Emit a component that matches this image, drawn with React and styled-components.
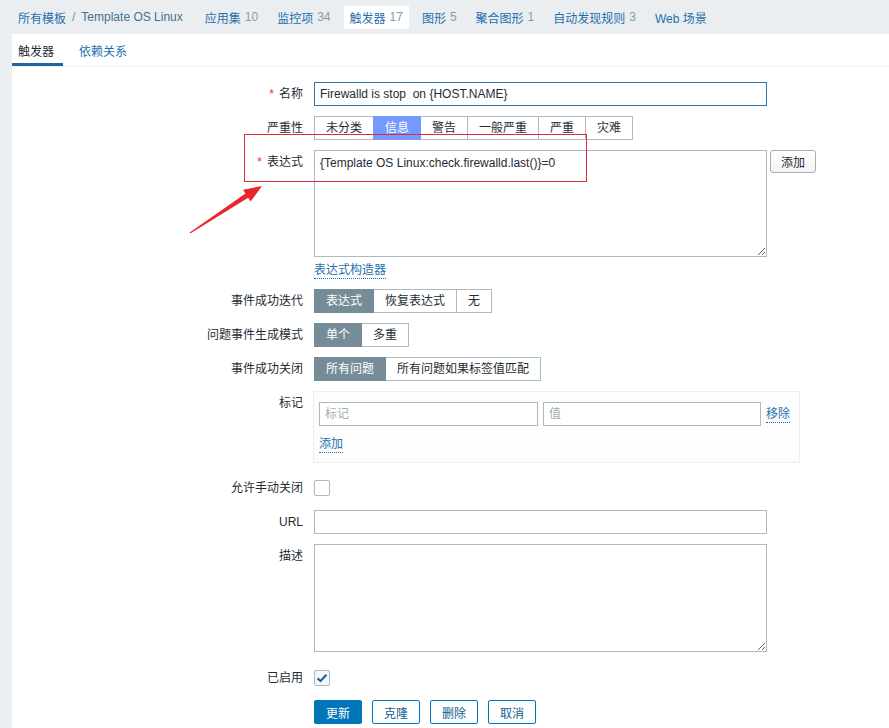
import React from 'react';
import styled, { createGlobalStyle, css } from 'styled-components';

const GlobalStyle = createGlobalStyle`
  html, body {
    margin: 0;
    padding: 0;
    background: #ebeef0;
  }
  body {
    font-family: "Liberation Sans", "Noto Sans CJK SC", sans-serif;
    font-size: 12px;
    color: #1f2c33;
  }
`;

const Page = styled.div`
  position: relative;
  width: 889px;
  height: 728px;
  overflow: hidden;
  background: #ebeef0;
`;

const TopNav = styled.nav`
  display: flex;
  align-items: center;
  height: 34px;
  padding-left: 12px;
  gap: 7px;
`;

const NavItem = styled.a`
  display: inline-flex;
  align-items: center;
  height: 23px;
  padding: 0 6px;
  color: #1f6fae;
  white-space: nowrap;
  ${(p) => p.$active && css`
    background: #ffffff;
  `}
`;

const Crumb = styled.span`
  display: inline-flex;
  align-items: center;
  gap: 6px;
  padding: 0 6px;
  margin-right: 3px;
  color: #1f6fae;
`;

const CrumbSep = styled.span`
  color: #768d99;
`;

const CrumbHost = styled.span`
  color: #46708f;
`;

const Count = styled.span`
  color: #8b9ba4;
  margin-left: 4px;
`;

const Panel = styled.div`
  margin-left: 12px;
  background: #ffffff;
  height: 694px;
`;

const SubTabs = styled.div`
  display: flex;
  height: 32px;
  border-bottom: 1px solid #f0f2f3;
`;

const SubTab = styled.div`
  display: flex;
  align-items: center;
  padding: 0 9px 0 6px;
  margin-right: 10px;
  color: ${(p) => (p.$active ? '#1f2c33' : '#1f6fae')};
  border-bottom: 3px solid ${(p) => (p.$active ? '#1f65a6' : 'transparent')};
  padding-top: 3px;
`;

const Form = styled.div`
  display: grid;
  grid-template-columns: 291px 1fr;
  column-gap: 11px;
  row-gap: 10px;
  padding-top: 15px;
`;

const Label = styled.div`
  text-align: right;
  line-height: 24px;
  white-space: nowrap;
  ${(p) => p.$required && css`
    &::before {
      content: '*';
      color: #e33734;
      margin-right: 5px;
    }
  `}
`;

const Field = styled.div`
  display: flex;
  align-items: flex-start;
  margin-bottom: ${(p) => p.$mb || 0}px;
`;

const Column = styled.div`
  display: flex;
  flex-direction: column;
  align-items: flex-start;
`;

const TextInput = styled.input`
  box-sizing: border-box;
  width: ${(p) => p.$w || 453}px;
  height: 24px;
  padding: 0 5px;
  border: 1px solid ${(p) => (p.$focused ? '#2f79b3' : '#acbbc2')};
  background: #ffffff;
  font: inherit;
  color: #1f2c33;
  outline: none;
  &::placeholder {
    color: #a3adb3;
  }
`;

const TextArea = styled.textarea`
  box-sizing: border-box;
  width: 453px;
  height: ${(p) => p.$h}px;
  padding: 5px;
  border: 1px solid #acbbc2;
  font: inherit;
  line-height: 14px;
  color: #1f2c33;
  resize: vertical;
  outline: none;
`;

const PlainButton = styled.button`
  box-sizing: border-box;
  height: 23px;
  margin-left: 3px;
  padding: 0 10px;
  border: 1px solid #adadad;
  border-radius: 3px;
  background: linear-gradient(#ffffff, #f3f3f3);
  font: inherit;
  color: #1f2c33;
`;

const ToggleGroup = styled.div`
  display: flex;
`;

const Toggle = styled.div`
  box-sizing: border-box;
  height: 24px;
  line-height: 22px;
  padding: 0 11px;
  border: 1px solid #acbbc2;
  margin-left: -1px;
  &:first-child {
    margin-left: 0;
  }
  background: ${(p) => p.$bg || '#ffffff'};
  color: ${(p) => (p.$bg ? '#ffffff' : '#1f2c33')};
  ${(p) => p.$bg && css`
    border-color: ${p.$bg};
    position: relative;
  `}
`;

const DottedLink = styled.a`
  color: #1f6fae;
  line-height: 16px;
  border-bottom: 1px dotted #1f6fae;
  cursor: pointer;
  margin-top: ${(p) => p.$mt || 0}px;
  margin-bottom: ${(p) => p.$mb || 0}px;
`;

const TagBox = styled.div`
  box-sizing: border-box;
  width: 487px;
  margin-left: -1px;
  margin-bottom: 3px;
  padding: 10px 6px 6px 5px;
  border: 1px solid #ebeef0;
  background: #fdfdfd;
  display: flex;
  flex-direction: column;
  align-items: flex-start;
  gap: 6px;
`;

const TagRow = styled.div`
  display: flex;
  align-items: center;
  gap: 5px;
`;

const AddRow = styled.div`
  height: 24px;
  display: flex;
  align-items: center;
`;

const CheckRow = styled.div`
  height: 24px;
  display: flex;
  align-items: center;
`;

const Check = styled.span`
  box-sizing: border-box;
  width: 16px;
  height: 16px;
  border: 1px solid #acbbc2;
  border-radius: 2px;
  background: ${(p) => (p.$checked ? '#f4f7f9' : '#ffffff')};
  display: inline-flex;
  align-items: center;
  justify-content: center;
`;

const ButtonRow = styled.div`
  display: flex;
  gap: 10px;
`;

const ActionButton = styled.button`
  box-sizing: border-box;
  height: 24px;
  padding: 0 11px;
  border: 1px solid #0275b8;
  border-radius: 2px;
  font: inherit;
  background: ${(p) => (p.$primary ? '#0275b8' : '#ffffff')};
  color: ${(p) => (p.$primary ? '#ffffff' : '#0f5e8e')};
`;

const RedFrame = styled.div`
  position: absolute;
  left: 244px;
  top: 134px;
  width: 343px;
  height: 48px;
  box-sizing: border-box;
  border: 1px solid #dc2c3a;
  pointer-events: none;
`;

const ArrowSvg = styled.svg`
  position: absolute;
  left: 180px;
  top: 180px;
  pointer-events: none;
`;

const navItems = [
  { name: '应用集', count: 10 },
  { name: '监控项', count: 34 },
  { name: '触发器', count: 17, active: true },
  { name: '图形', count: 5 },
  { name: '聚合图形', count: 1 },
  { name: '自动发现规则', count: 3 },
  { name: 'Web 场景' },
];

const severities = ['未分类', '信息', '警告', '一般严重', '严重', '灾难'];

const App = () => (
  <Page>
    <GlobalStyle />
    <TopNav>
      <Crumb>
        所有模板 <CrumbSep>/</CrumbSep> <CrumbHost>Template OS Linux</CrumbHost>
      </Crumb>
      {navItems.map((item) => (
        <NavItem key={item.name} $active={item.active}>
          {item.name}
          {item.count !== undefined && <Count>{item.count}</Count>}
        </NavItem>
      ))}
    </TopNav>

    <Panel>
      <SubTabs>
        <SubTab $active>触发器</SubTab>
        <SubTab>依赖关系</SubTab>
      </SubTabs>

      <Form>
        <Label $required>名称</Label>
        <Field>
          <TextInput $focused readOnly value="Firewalld is stop  on {HOST.NAME}" />
        </Field>

        <Label>严重性</Label>
        <Field>
          <ToggleGroup>
            {severities.map((s) => (
              <Toggle key={s} $bg={s === '信息' ? '#7499ff' : undefined}>{s}</Toggle>
            ))}
          </ToggleGroup>
        </Field>

        <Label $required>表达式</Label>
        <Column>
          <Field>
            <TextArea $h={107} readOnly value="{Template OS Linux:check.firewalld.last()}=0" />
            <PlainButton>添加</PlainButton>
          </Field>
          <DottedLink $mt={5} $mb={0}>表达式构造器</DottedLink>
        </Column>

        <Label>事件成功迭代</Label>
        <Field>
          <ToggleGroup>
            <Toggle $bg="#768d99">表达式</Toggle>
            <Toggle>恢复表达式</Toggle>
            <Toggle>无</Toggle>
          </ToggleGroup>
        </Field>

        <Label>问题事件生成模式</Label>
        <Field>
          <ToggleGroup>
            <Toggle $bg="#768d99">单个</Toggle>
            <Toggle>多重</Toggle>
          </ToggleGroup>
        </Field>

        <Label>事件成功关闭</Label>
        <Field>
          <ToggleGroup>
            <Toggle $bg="#768d99">所有问题</Toggle>
            <Toggle>所有问题如果标签值匹配</Toggle>
          </ToggleGroup>
        </Field>

        <Label>标记</Label>
        <Field>
          <TagBox>
            <TagRow>
              <TextInput $w={219} placeholder="标记" />
              <TextInput $w={218} placeholder="值" />
              <DottedLink>移除</DottedLink>
            </TagRow>
            <AddRow>
              <DottedLink>添加</DottedLink>
            </AddRow>
          </TagBox>
        </Field>

        <Label>允许手动关闭</Label>
        <CheckRow>
          <Check />
        </CheckRow>

        <Label>URL</Label>
        <Field>
          <TextInput />
        </Field>

        <Label>描述</Label>
        <Field $mb={4}>
          <TextArea $h={108} />
        </Field>

        <Label>已启用</Label>
        <CheckRow>
          <Check $checked>
            <svg width="12" height="10" viewBox="0 0 12 10">
              <path d="M1.5 5.2 L4.5 8 L10.5 1.8" fill="none" stroke="#1f5f8f" strokeWidth="2" />
            </svg>
          </Check>
        </CheckRow>

        <div />
        <ButtonRow>
          <ActionButton $primary>更新</ActionButton>
          <ActionButton>克隆</ActionButton>
          <ActionButton>删除</ActionButton>
          <ActionButton>取消</ActionButton>
        </ButtonRow>
      </Form>
    </Panel>

    <RedFrame />
    <ArrowSvg width="90" height="60" viewBox="0 0 90 60">
      <polygon
        points="82,6 70.6,21.6 68.1,17.8 10.3,53.5 9.7,52.5 65.5,13.6 63,9.8"
        fill="#e8262b"
      />
    </ArrowSvg>
  </Page>
);

export default App;
